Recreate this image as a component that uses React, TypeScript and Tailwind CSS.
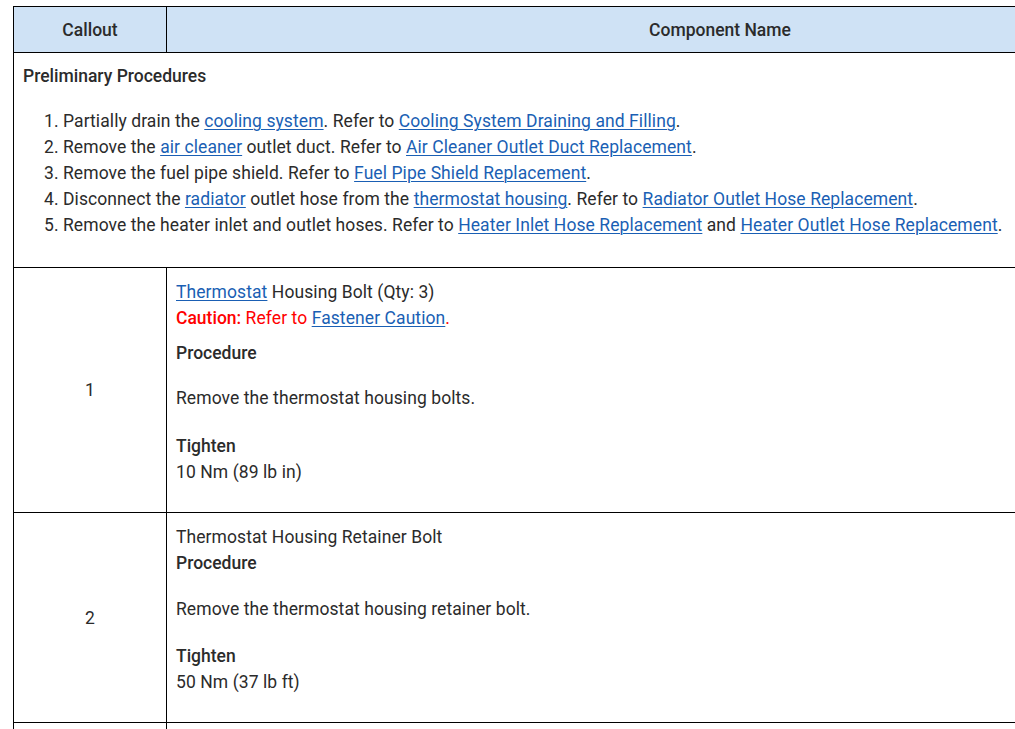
import React from "react";

const A = ({ children }: { children: React.ReactNode }) => (
  <a href="#" className="text-[#1a5fb4] underline underline-offset-2 decoration-1">
    {children}
  </a>
);

type Step = {
  num: string;
  title: React.ReactNode;
  caution?: boolean;
  action: string;
  torque: string;
};

const steps: Step[] = [
  {
    num: "1",
    title: (
      <>
        <A>Thermostat</A> Housing Bolt (Qty: 3)
      </>
    ),
    caution: true,
    action: "Remove the thermostat housing bolts.",
    torque: "10 Nm (89 lb in)",
  },
  {
    num: "2",
    title: "Thermostat Housing Retainer Bolt",
    action: "Remove the thermostat housing retainer bolt.",
    torque: "50 Nm (37 lb ft)",
  },
];

export default function App() {
  return (
    <div
      className="w-screen h-screen overflow-hidden bg-white pl-[13px] pt-[6px] text-[17.5px] leading-[26px] tracking-[0.08px] text-[#2b2b2b]"
      style={{ fontFamily: "Roboto, 'Liberation Sans', sans-serif" }}
    >
      <table className="border-collapse w-[1261px] table-fixed">
        <colgroup>
          <col className="w-[153px]" />
          <col />
        </colgroup>
        <thead>
          <tr className="bg-[#cfe2f5] h-[46px]">
            <th className="border border-black font-medium tracking-normal text-center">Callout</th>
            <th className="border border-black font-medium tracking-normal text-center">Component Name</th>
          </tr>
        </thead>
        <tbody>
          <tr>
            <td colSpan={2} className="border border-black pl-[9px] pt-[10px] pb-[29px] align-top">
              <div className="font-medium tracking-normal">Preliminary Procedures</div>
              <ol className="list-decimal pl-[40px] mt-[19px]">
                <li>
                  Partially drain the <A>cooling system</A>. Refer to{" "}
                  <A>Cooling System Draining and Filling</A>.
                </li>
                <li>
                  Remove the <A>air cleaner</A> outlet duct. Refer to{" "}
                  <A>Air Cleaner Outlet Duct Replacement</A>.
                </li>
                <li>
                  Remove the fuel pipe shield. Refer to <A>Fuel Pipe Shield Replacement</A>.
                </li>
                <li>
                  Disconnect the <A>radiator</A> outlet hose from the{" "}
                  <A>thermostat housing</A>. Refer to <A>Radiator Outlet Hose Replacement</A>.
                </li>
                <li>
                  Remove the heater inlet and outlet hoses. Refer to{" "}
                  <A>Heater Inlet Hose Replacement</A> and{" "}
                  <A>Heater Outlet Hose Replacement</A>.
                </li>
              </ol>
            </td>
          </tr>
          {steps.map((s) => (
            <tr key={s.num}>
              <td className="border border-black text-center align-middle">{s.num}</td>
              <td className="border border-black pl-[9px] pt-[11px] pb-[27px] align-top">
                <div>{s.title}</div>
                {s.caution && (
                  <div className="text-[#ff0000]">
                    <span className="font-medium tracking-normal">Caution:</span> Refer to{" "}
                    <A>Fastener Caution</A>.
                  </div>
                )}
                <div className={`font-medium tracking-normal ${s.caution ? "mt-[9px]" : ""}`}>
                  Procedure
                </div>
                <div className={s.caution ? "mt-[19px]" : "mt-[20px]"}>{s.action}</div>
                <div className={`font-medium tracking-normal ${s.caution ? "mt-[22px]" : "mt-[21px]"}`}>
                  Tighten
                </div>
                <div>{s.torque}</div>
              </td>
            </tr>
          ))}
          <tr className="h-[60px]">
            <td className="border border-black"></td>
            <td className="border border-black"></td>
          </tr>
        </tbody>
      </table>
    </div>
  );
}
